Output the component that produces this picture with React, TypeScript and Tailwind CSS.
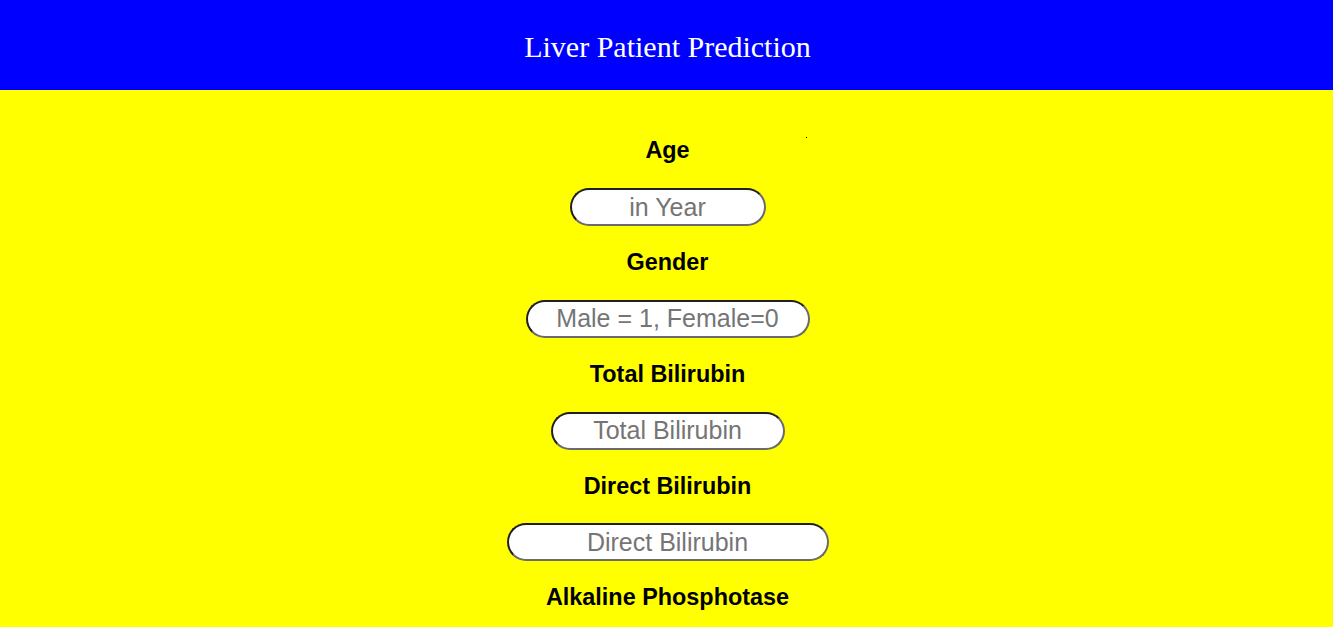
import React from "react";

const fields = [
  { label: "Age", placeholder: "in Year", w: "w-[196px]" },
  { label: "Gender", placeholder: "Male = 1, Female=0", w: "w-[284px]" },
  { label: "Total Bilirubin", placeholder: "Total Bilirubin", w: "w-[234px]" },
  { label: "Direct Bilirubin", placeholder: "Direct Bilirubin", w: "w-[322px]" },
  { label: "Alkaline Phosphotase", placeholder: "Alkaline Phosphotase", w: "w-[300px]" },
];

export default function App() {
  return (
    <div className="min-h-[627px] bg-[#ffff00] font-['Liberation_Sans',Arial,sans-serif]">
      <header className="h-[90px] bg-[#0000ff] flex items-center justify-center">
        <h1 className="text-white text-[30px] leading-none font-['Liberation_Serif','Times_New_Roman',serif] font-normal pt-[4px] pl-[2px]">
          Liver Patient Prediction
        </h1>
      </header>
      <div className="relative flex flex-col items-center pt-[47px] pl-[2px] pb-10">
        <div className="absolute left-[806px] top-[47px] w-px h-px bg-black" />
        {fields.map((f) => (
          <div key={f.label} className="flex flex-col items-center">
            <div className="h-[28px] flex items-center text-[23.4px] font-bold text-black leading-none">
              {f.label}
            </div>
            <input
              className={`mt-[23px] mb-[22.75px] h-[38px] ${f.w} rounded-full bg-white border-2 border-t-[#1f1f1f] border-l-[#1f1f1f] border-r-[#6b6b6b] border-b-[#6b6b6b] text-center text-[25px] leading-none placeholder:text-[#757575] outline-none`}
              placeholder={f.placeholder}
            />
          </div>
        ))}
      </div>
    </div>
  );
}
